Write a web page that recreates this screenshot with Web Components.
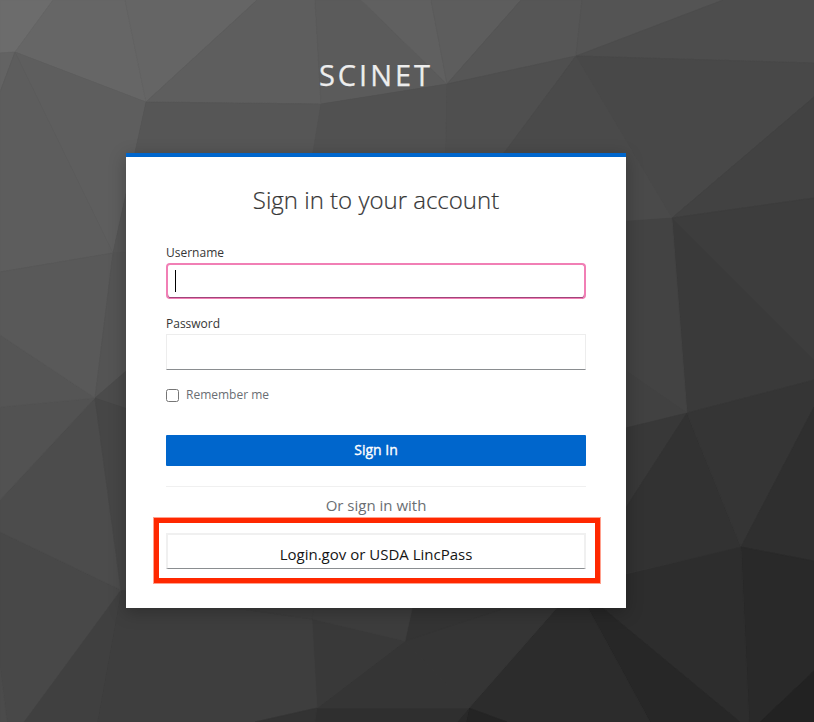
<!DOCTYPE html>
<html lang="en"><head><meta charset="utf-8"><title>Sign in</title>
<style>html,body{margin:0;height:100%;overflow:hidden;background:#444}</style></head><body>
<login-page></login-page>
<script>
function define(name, html, init) {
  customElements.define(name, class extends HTMLElement {
    constructor() { super(); this.attachShadow({mode:'open'}).innerHTML = html; if (init) init.call(this, this.shadowRoot); }
  });
}
// Faceted backdrop: each facet is a fill followed by its corner points.
const facets = [
['#6c6c6c','0,0 53,0 15,52 0,53'],['#666666','53,0 125,0 146,102 15,52'],['#656565','125,0 257,0 146,102'],
['#5e5e5e','257,0 315,0 321,104 146,102'],['#636363','0,53 15,52 0,92'],['#5e5e5e','15,52 146,102 113,253'],
['#5d5d5d','15,52 113,253 0,272 0,92'],['#565656','146,102 321,104 305,253 113,253'],
['#5b5b5b','315,0 361,0 447,84 321,104'],['#606060','361,0 431,0 447,84'],['#5d5d5d','431,0 521,0 447,84'],
['#565656','521,0 582,0 576,56 447,84'],['#545454','582,0 723,0 576,56'],['#4d4d4d','723,0 814,0 814,63 576,56'],
['#484848','576,56 814,63 814,97 672,218'],['#424242','814,97 814,198 672,218'],['#3d3d3d','814,198 814,360 672,218'],
['#3a3a3a','672,218 814,360 814,380 687,413'],['#515151','321,104 447,84 445,200 305,200'],
['#4f4f4f','447,84 576,56 505,153 445,200'],['#4a4a4a','576,56 672,218 600,224 440,239'],
['#434343','672,218 687,413 600,353 600,223'],['#414141','687,413 600,434 600,353'],['#383838','687,413 576,586 576,440'],
['#323232','687,413 741,547 576,585'],['#353535','687,413 814,380 814,407 741,547'],['#2f2f2f','814,407 814,561 741,547'],
['#292929','741,547 814,561 814,671 760,722 749,722'],['#222222','814,671 814,722 760,722'],
['#2d2d2d','741,547 749,722 740,722 576,586'],['#272727','576,586 740,722 650,722'],
['#2c2c2c','576,586 650,722 507,722 469,708'],['#242424','469,708 507,722 466,722'],['#292929','469,708 466,722 457,722'],
['#2f2f2f','317,708 469,708 457,722 315,722'],['#353535','405,641 503,608 576,586 469,708'],
['#343434','405,641 414,600 530,600'],['#353535','405,641 469,708 317,708'],['#393939','312,619 405,641 317,708'],
['#3d3d3d','312,619 315,600 414,600 405,641'],['#3e3e3e','121,590 235,608 312,619 317,708 255,722 97,722'],
['#3d3d3d','200,600 315,600 312,619 235,608'],['#333333','317,708 315,722 255,722'],['#414141','121,590 97,722 24,722'],
['#484848','0,532 121,590 24,722 7,722 0,667'],['#4b4b4b','0,667 7,722 0,722'],
['#4c4c4c','95,398 121,590 0,532 0,500'],['#525252','0,407 95,398 0,500'],['#555555','0,335 95,398 0,407'],
['#595959','113,253 95,398 0,335 0,272'],['#545454','113,253 140,251 140,359 95,398'],
['#4b4b4b','95,398 140,359 140,413'],['#464646','95,398 140,413 140,585 121,590']];
define('poly-backdrop', `<style>:host{display:block;position:absolute;inset:0}svg{display:block}</style>
<svg width="814" height="722" viewBox="0 0 814 722" aria-hidden="true">${facets.map(([c,p])=>`<polygon fill="${c}" stroke="${c}" stroke-width=".6" points="${p}"/>`).join('')}<polygon fill="#404040" points="24,722 97,722 121,590"/></svg>`);
define('site-title', `<style>:host{display:block;text-align:center;font-size:29px;line-height:40px;letter-spacing:3px;color:#ededed;box-sizing:border-box;-webkit-text-stroke:.25px #ededed}</style><slot></slot>`);
define('login-card', `<style>:host{display:block;box-sizing:border-box;width:500px;height:455px;border-top:4px solid #06c;background:#fff;padding:25px 40px 0;box-shadow:0 4px 16px rgba(3,3,3,.25)}
h1{margin:0;font-size:24px;line-height:36px;font-weight:300;text-align:center;color:#363636;-webkit-text-stroke:.2px #363636}</style><h1><slot name="heading"></slot></h1><slot></slot>`);
define('text-field', `<style>:host{display:block;height:71px;font-size:12px;color:#363636}label{display:block;height:18px;line-height:20px}
.box{box-sizing:border-box;height:36px;margin-top:2px;border:1px solid #ededed;border-bottom-color:#8a8d90}
:host([active]) .box{border:2px solid #f17fb5;border-bottom:0;border-radius:4px;box-shadow:inset 0 -1px #f17fb5,inset 0 -2px #a0457a;display:flex;align-items:center;padding:0 0 3px 7px}
.caret{display:none;width:1px;height:22px;background:#000}:host([active]) .caret{display:block}</style>
<label><slot></slot></label><div class="box"><span class="caret"></span></div>`);
define('check-option', `<style>:host{display:flex;align-items:center;gap:7px;height:18px;font-size:12px;line-height:18px;color:#6a6e73}i{box-sizing:border-box;width:13px;height:13px;border:1px solid #767676;border-radius:2.5px;margin-top:2px}span{padding-top:2px}</style><i></i><span><slot></slot></span>`);
define('primary-button', `<style>:host{display:block}button{display:block;width:100%;height:31px;border:0;border-radius:1px;padding:0 0 2px;background:#06c;color:#fff;font:500 14px/29px "Open Sans",sans-serif;-webkit-text-stroke:.35px #fff}</style><button><slot></slot></button>`);
define('social-login', `<style>:host{display:block;border-top:1px solid #f0f0f0;text-align:center}
h2{margin:5px 0 15px;font-size:15px;line-height:26px;font-weight:400;color:#6a6e73}
.wrap{position:relative}.mark{position:absolute;left:-12px;top:-15px;width:446px;height:65px;box-sizing:border-box;border:5px solid #ff2800;outline:1px solid #ff280070;outline-offset:0}
a{display:block;box-sizing:border-box;height:36px;border:2px solid #f0f0f0;border-bottom:1px solid #8a8d90;line-height:38px;font-size:15px;color:#151515}</style>
<h2><slot name="heading"></slot></h2><div class="wrap"><a><slot></slot></a><div class="mark"></div></div>`);
define('login-page', `<style>:host{display:block;position:relative;width:814px;height:722px;overflow:hidden;font-family:"Open Sans",sans-serif}
main{position:relative;width:500px;margin-left:126px;padding-top:55px}site-title{height:98px}
text-field:first-of-type{margin-top:25px}primary-button{margin-top:32px}social-login{margin-top:20px}</style>
<poly-backdrop></poly-backdrop><main><site-title>SCINET</site-title>
<login-card><span slot="heading">Sign in to your account</span>
<text-field active>Username</text-field><text-field>Password</text-field><check-option>Remember me</check-option>
<primary-button>Sign In</primary-button><social-login><span slot="heading">Or sign in with</span>Login.gov or USDA LincPass</social-login></login-card></main>`);
</script></body></html>
